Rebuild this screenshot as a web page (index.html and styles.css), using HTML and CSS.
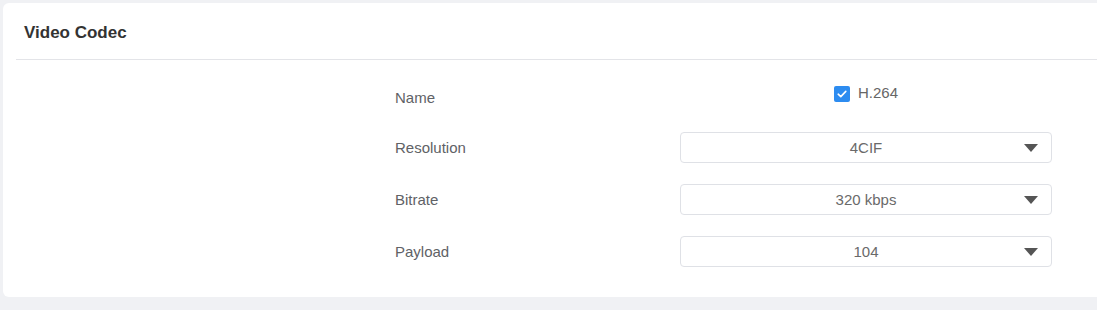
FILE: index.html
```html
<!DOCTYPE html>
<html>
<head>
<meta charset="utf-8">
<link rel="stylesheet" href="styles.css">
</head>
<body>
<div class="card">
  <div class="card-header">Video Codec</div>
  <div class="form">
    <div class="row row-name">
      <div class="label">Name</div>
      <div class="control">
        <label class="check">
          <span class="box"><svg width="10" height="8" viewBox="0 0 10 8"><path d="M1.2 4.2 L3.8 6.6 L8.8 1.4" fill="none" stroke="#fff" stroke-width="1.6" stroke-linecap="round" stroke-linejoin="round"/></svg></span>
          <span class="check-text">H.264</span>
        </label>
      </div>
    </div>
    <div class="row">
      <div class="label">Resolution</div>
      <div class="control"><div class="select"><span class="value">4CIF</span><span class="arrow"></span></div></div>
    </div>
    <div class="row">
      <div class="label">Bitrate</div>
      <div class="control"><div class="select"><span class="value">320 kbps</span><span class="arrow"></span></div></div>
    </div>
    <div class="row">
      <div class="label">Payload</div>
      <div class="control"><div class="select"><span class="value">104</span><span class="arrow"></span></div></div>
    </div>
  </div>
</div>
</body>
</html>
```

FILE: styles.css
```css
html, body {
  margin: 0;
  padding: 0;
}
body {
  background: #f0f1f4;
  font-family: "Liberation Sans", Arial, sans-serif;
  height: 310px;
  overflow: hidden;
}
.card {
  margin: 3px 0 0 3px;
  width: 1110px;
  height: 294px;
  background: #fff;
  border-radius: 6px;
  box-sizing: border-box;
}
.card-header {
  height: 57px;
  box-sizing: border-box;
  padding-left: 8px;
  padding-top: 20px;
  font-size: 17px;
  font-weight: bold;
  color: #333;
  line-height: 20px;
  margin-left: 13px;
  border-bottom: 1px solid #e3e4e8;
}
.form {
  padding: 20px 0 0 392px;
  display: flex;
  flex-direction: column;
  gap: 19px;
}
.form .row + .row + .row {
  margin-top: 1px;
}
.row {
  display: grid;
  grid-template-columns: 285px 372px;
  height: 32px;
  align-items: center;
}
.label {
  font-size: 15px;
  color: #606266;
}
.row-name .label {
  padding-top: 2px;
}
.control {
  display: flex;
  justify-content: center;
  align-items: center;
}
.check {
  display: flex;
  align-items: center;
  gap: 8px;
  margin-bottom: 4px;
}
.box {
  width: 16px;
  height: 16px;
  border-radius: 2px;
  background: #2d8cf0;
  display: flex;
  align-items: center;
  justify-content: center;
}
.check-text {
  font-size: 15px;
  color: #666;
  line-height: 16px;
  margin-top: -3px;
}
.select {
  width: 372px;
  height: 31px;
  box-sizing: border-box;
  border: 1px solid #dfe1e6;
  border-radius: 4px;
  display: flex;
  align-items: center;
  justify-content: center;
  position: relative;
}
.value {
  font-size: 15px;
  color: #6a6a6a;
}
.arrow {
  position: absolute;
  right: 13px;
  top: 11px;
  width: 0;
  height: 0;
  border-left: 7px solid transparent;
  border-right: 7px solid transparent;
  border-top: 8px solid #555;
}
```
